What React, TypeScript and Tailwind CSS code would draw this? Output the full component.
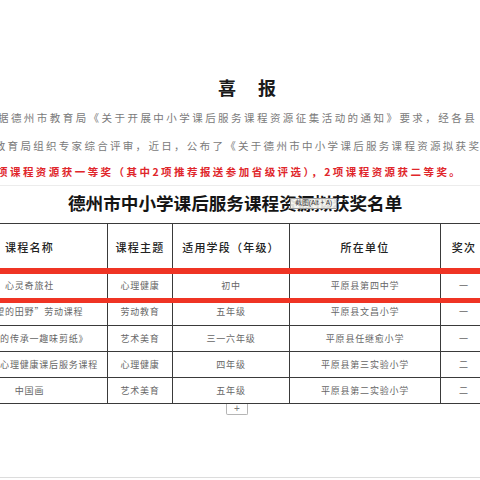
import React from "react";

const cjk = "font-['Noto_Sans_CJK_SC',sans-serif]";

const rows = [
  { h: "h-[28px] pt-[2px]", c: ["心灵奇旅社", "心理健康", "初中", "平原县第四中学", "一"] },
  { h: "h-[27px]", c: ["“希望的田野”劳动课程", "劳动教育", "五年级", "平原县文昌小学", "一"] },
  { h: "h-[26px]", c: ["《乡土的传承一趣味剪纸》", "艺术美育", "三一六年级", "平原县任继愈小学", "一"] },
  { h: "h-[26px]", c: ["中小学生心理健康课后服务课程", "心理健康", "四年级", "平原县第三实验小学", "二"] },
  { h: "h-[26px]", c: ["中国画", "艺术美育", "五年级", "平原县第二实验小学", "二"] },
];

const headers = ["课程名称", "课程主题", "适用学段（年级）", "所在单位", "奖次"];

export default function App() {
  return (
    <div className={`w-[480px] h-[480px] overflow-hidden bg-white flex flex-col ${cjk}`}>
      <div className="pt-[75px] pl-[218px] flex gap-[22px] text-[18px] leading-[24px] font-bold text-[#1a1a1a]">
        <span>喜</span>
        <span>报</span>
      </div>
      <div className="mt-[11px] -ml-[15px] whitespace-nowrap text-[10.5px] leading-[16px] tracking-[2.45px] text-[#7a7a7a]">
        根据德州市教育局《关于开展中小学课后服务课程资源征集活动的通知》要求，经各县
      </div>
      <div className="mt-[12px] -ml-[18px] whitespace-nowrap text-[10.5px] leading-[16px] tracking-[2.3px] text-[#7a7a7a]">
        市教育局组织专家综合评审，近日，公布了《关于德州市中小学课后服务课程资源拟获奖
      </div>
      <div className="mt-[10px] -ml-[3px] whitespace-nowrap text-[10.5px] leading-[16px] tracking-[2.45px] font-bold text-[#e0262b]">
        项课程资源获一等奖（其中2项推荐报送参加省级评选），2项课程资源获二等奖。
      </div>
      <div className="mt-[5px] h-px bg-[#ececec]" />
      <div className="relative mt-[5px] pl-[68px] whitespace-nowrap text-[17.6px] leading-[24px] font-bold text-[#151515]">
        德州市中小学课后服务课程资源拟获奖名单
        <div className="absolute left-[290px] top-[7px] w-[47px] h-[11px] border border-[#9a9a9a] bg-[#f4f4f0]/90 flex items-center justify-center font-['Liberation_Sans',sans-serif] font-normal text-[6.5px] leading-none tracking-normal text-[#333]">
          截图(Alt + A)
        </div>
      </div>
      <div className="relative mt-[8px] -ml-[48px] w-[600px] border-t border-[#3a3a3a]">
        <div className="grid grid-cols-[155px_65px_117px_151px_47px] h-[47px] border-b border-[#3a3a3a] text-[11px] tracking-[1.2px] text-[#222] font-medium">
          {headers.map((t, i) => (
            <div
              key={i}
              className={`flex items-center justify-center whitespace-nowrap ${i > 0 ? "border-l border-[#3a3a3a]" : ""}`}
            >
              {t}
            </div>
          ))}
        </div>
        {rows.map((r, ri) => (
          <div
            key={ri}
            className={`grid grid-cols-[155px_65px_117px_151px_47px] ${r.h} border-b border-[#3a3a3a] text-[9px] tracking-[0.8px] text-[#666]`}
          >
            {r.c.map((t, i) => (
              <div
                key={i}
                className={`flex items-center justify-center whitespace-nowrap ${i > 0 ? "border-l border-[#3a3a3a]" : ""}`}
              >
                {t}
              </div>
            ))}
          </div>
        ))}
        <div className="absolute left-[48px] top-[44px] w-[480px] h-[6px] bg-[#ef3424]" />
        <div className="absolute left-[48px] top-[74px] w-[480px] h-[5px] bg-[#ef3424]" />
      </div>
      <div className="ml-[226px] w-[22px] h-[11px] border border-t-0 border-[#b5b5b5] rounded-b-[2px] flex items-center justify-center text-[10px] leading-none text-[#777] font-['Liberation_Sans',sans-serif]">
        +
      </div>
      <div className="mt-auto mb-[2px] h-px bg-[#dcdcdc]" />
    </div>
  );
}
